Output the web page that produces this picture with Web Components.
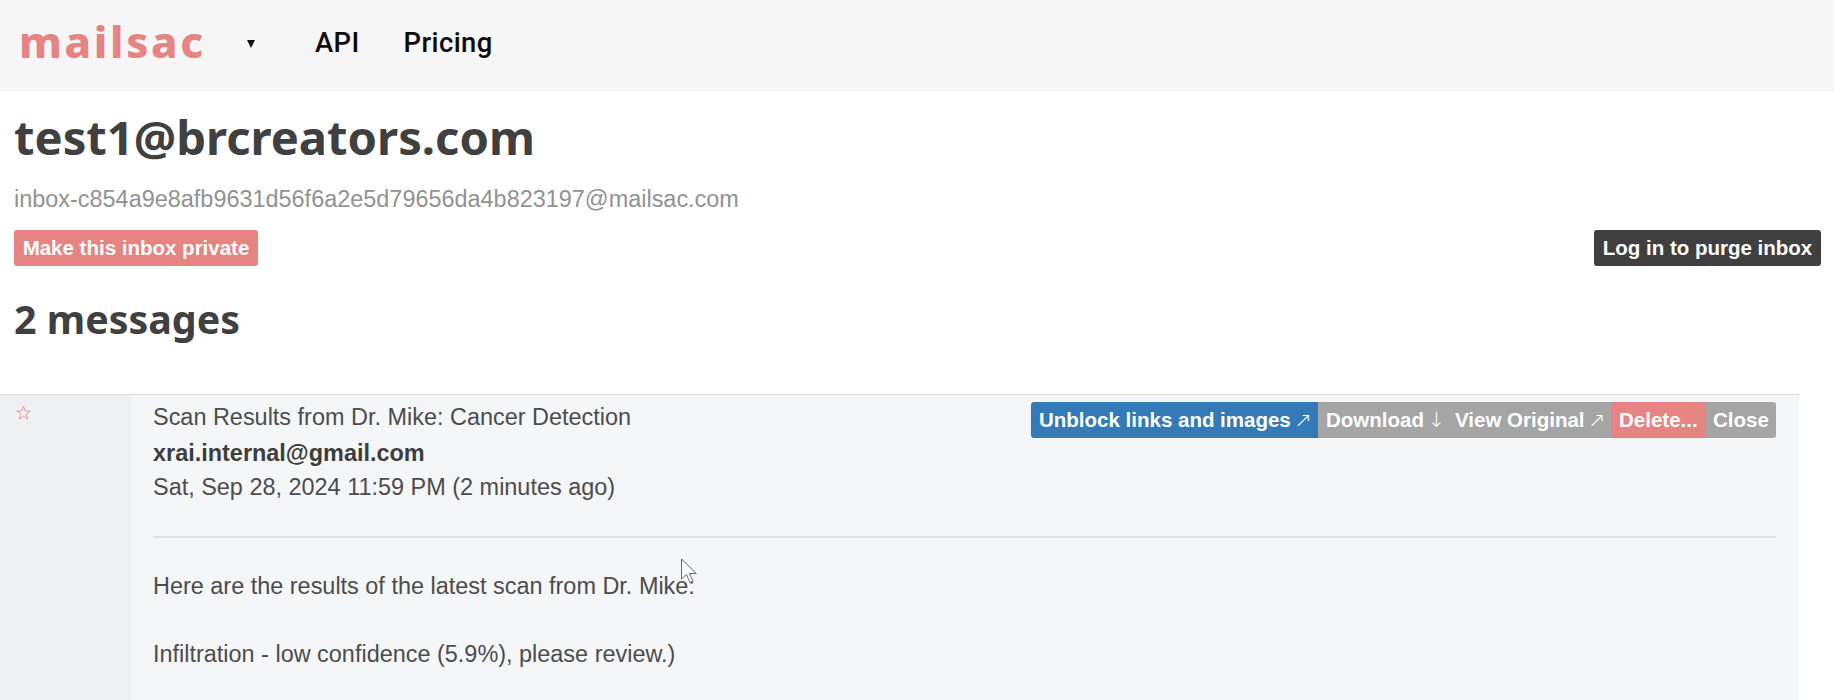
<!DOCTYPE html>
<html>
<head>
<meta charset="utf-8">
<title>mailsac</title>
<style>
html, body { margin: 0; padding: 0; background: #fff; overflow: hidden; }
body { height: 700px; font-family: "Liberation Sans", Arial, sans-serif; color: #3f3f3f; }
</style>
</head>
<body>
<site-nav></site-nav>
<inbox-head address="test1@brcreators.com" alias="inbox-c854a9e8afb9631d56f6a2e5d79656da4b823197@mailsac.com"></inbox-head>
<message-row>
  <span slot="subject">Scan Results from Dr. Mike: Cancer Detection</span>
  <span slot="sender">xrai.internal@gmail.com</span>
  <span slot="date">Sat, Sep 28, 2024 11:59 PM (2 minutes ago)</span>
  <p>Here are the results of the latest scan from Dr. Mike:</p>
  <p>Infiltration - low confidence (5.9%), please review.)</p>
</message-row>
<mouse-cursor></mouse-cursor>
<script>
class SiteNav extends HTMLElement {
    constructor() {
        super()
        this.shadowDOM = this.attachShadow({mode : "open"})
    }
    connectedCallback() {
        this.shadowDOM.innerHTML = `
            <style>
            :host { display: flex; align-items: center; height: 91px; background: #f6f6f6; padding-left: 19px; box-sizing: border-box; padding-bottom: 3px; }
            .logo { font: 800 43.5px/1 "Noto Sans", sans-serif; letter-spacing: 2.7px; color: #e58482; width: 228px; padding-bottom: 5px; }
            .caret { width: 0; height: 0; border-left: 4.5px solid transparent; border-right: 4.5px solid transparent; border-top: 8px solid #111; margin-right: 60px; }
            a { font: 500 27.4px/1 Roboto, sans-serif; color: #0c0c0c; margin-right: 44px; letter-spacing: .4px; }
            </style>
            <div class="logo">mailsac</div>
            <div class="caret"></div>
            <a>API</a>
            <a>Pricing</a>
        `
    }
}
customElements.define("site-nav", SiteNav)

class InboxHead extends HTMLElement {
    constructor() {
        super()
        this.shadowDOM = this.attachShadow({mode : "open"})
    }
    connectedCallback() {
        this.shadowDOM.innerHTML = `
            <style>
            :host { display: block; height: 303px; padding: 0 14px; box-sizing: border-box; }
            h1 { margin: 0; padding-top: 19px; font: 700 47.2px/55px "Noto Sans", sans-serif; color: #404040; }
            .alias { margin-top: 21px; font: 23.45px/26px "Liberation Sans", sans-serif; color: #929292; }
            .actions { display: flex; justify-content: space-between; align-items: center; margin-top: 18px; margin-right: -1px; }
            button { font: 700 20.5px/1 "Liberation Sans", sans-serif; color: #fff; border: 0; border-radius: 3px; padding: 0; height: 36px; }
            .red { background: #e58482; width: 244px; }
            .dark { background: #3f3f3f; width: 227px; }
            h2 { margin: 31px 0 0; font: 700 39.4px/44px "Noto Sans", sans-serif; color: #404040; }
            </style>
            <h1>${this.getAttribute("address")}</h1>
            <div class="alias">${this.getAttribute("alias")}</div>
            <div class="actions">
                <button class="red">Make this inbox private</button>
                <button class="dark">Log in to purge inbox</button>
            </div>
            <h2>2 messages</h2>
        `
    }
}
customElements.define("inbox-head", InboxHead)

class ActionGroup extends HTMLElement {
    constructor() {
        super()
        this.shadowDOM = this.attachShadow({mode : "open"})
    }
    connectedCallback() {
        this.shadowDOM.innerHTML = `
            <style>
            :host { display: flex; height: 36px; font: 700 20.5px/36px "Liberation Sans", sans-serif; color: #fff; border-radius: 3px; overflow: hidden; white-space: nowrap; }
            span { padding: 0 8px; box-sizing: border-box; }
            .blue { background: #337ab7; width: 287px; }
            .gray { background: #a5a5a5; }
            .red { background: #e58482; }
            i { font: 200 21px/36px "DejaVu Sans", sans-serif; margin-left: -2px; }
            </style>
            <span class="blue">Unblock links and images <i>↗</i></span>
            <span class="gray" style="width:129px">Download <i>↓</i></span>
            <span class="gray" style="width:164px">View Original <i>↗</i></span>
            <span class="red" style="width:94px">Delete...</span>
            <span class="gray" style="width:71px">Close</span>
        `
    }
}
customElements.define("action-group", ActionGroup)

class MessageRow extends HTMLElement {
    constructor() {
        super()
        this.shadowDOM = this.attachShadow({mode : "open"})
    }
    connectedCallback() {
        this.shadowDOM.innerHTML = `
            <style>
            :host { display: flex; width: 1799px; height: 306px; border-top: 1px solid #dcdcdc; box-sizing: border-box; font: 23.45px/35px "Liberation Sans", sans-serif; color: #4c4c4c; }
            .side { width: 131px; flex: none; background: #eff0f1; padding: 10px 0 0 15px; box-sizing: border-box; }
            .side svg { display: block; }
            .main { flex: 1; background: #f5f6f8; padding: 5px 23px 0 22px; }
            .top { display: flex; justify-content: space-between; align-items: flex-start; }
            .meta { display: flex; flex-direction: column; }
            .sender { font-weight: 700; color: #3d3d3d; margin: 1px 0 -1px; }
            action-group { margin-top: 2px; }
            hr { border: 0; border-top: 2px solid #dfe1e3; margin: 31px 0 0; }
            ::slotted(p) { margin: 0 0 33px; }
            .body { padding-top: 31px; }
            </style>
            <div class="side">
                <svg width="17" height="16" viewBox="0 0 18 18"><path d="M9 1.5l2 5.3h5.6l-4.5 3.4 1.7 5.6L9 12.5l-4.8 3.3 1.7-5.6L1.4 6.8H7z" fill="none" stroke="#e09a98" stroke-width="1.1"/></svg>
            </div>
            <div class="main">
                <div class="top">
                    <div class="meta">
                        <slot name="subject"></slot>
                        <span class="sender"><slot name="sender"></slot></span>
                        <slot name="date"></slot>
                    </div>
                    <action-group></action-group>
                </div>
                <hr>
                <div class="body"><slot></slot></div>
            </div>
        `
    }
}
customElements.define("message-row", MessageRow)

// the recorded pointer, sits over the message text
class MouseCursor extends HTMLElement {
    constructor() {
        super()
        this.shadowDOM = this.attachShadow({mode : "open"})
    }
    connectedCallback() {
        this.shadowDOM.innerHTML = `
            <style>
            :host { display: block; position: absolute; left: 680px; top: 558px; width: 20px; height: 28px; }
            svg { display: block; }
            </style>
            <svg width="20" height="28" viewBox="0 0 20 28"><path d="M1.5 1v20l5-4.5 3.5 8 3-1.4-3.5-7.6h6.8z" fill="#fff" fill-opacity=".85" stroke="#6a6a6a" stroke-width="1"/></svg>
        `
    }
}
customElements.define("mouse-cursor", MouseCursor)
</script>
</body>
</html>
